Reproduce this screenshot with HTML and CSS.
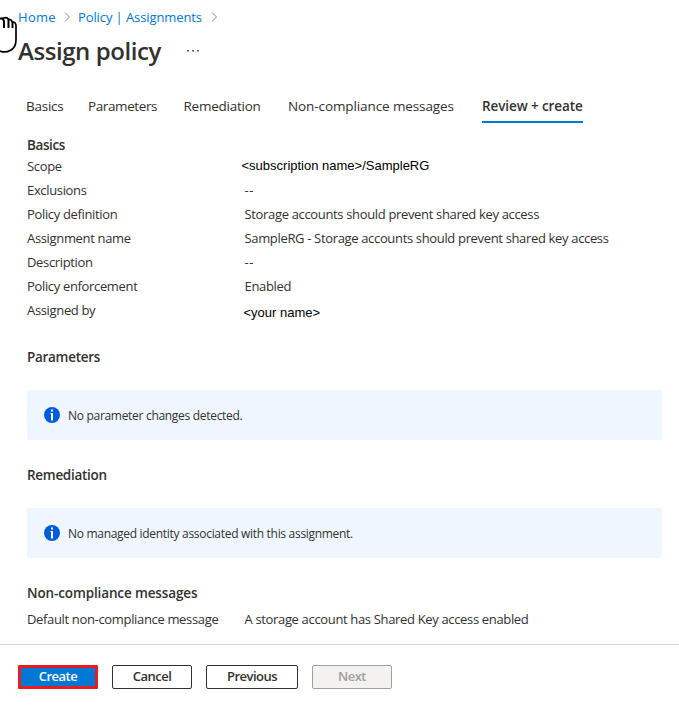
FILE: index.html
```html
<!DOCTYPE html>
<html lang="en">
<head>
<meta charset="utf-8">
<title>Assign policy</title>
<link rel="stylesheet" href="styles.css">
</head>
<body>
<svg class="cursor" width="18" height="40" viewBox="0 0 18 40"><path d="M0 4.500H2.500L4 7V14M8.500 5V14M12.500 7V14" fill="none" stroke="#000" stroke-width="2"/><path d="M3 4.500Q7 2.500 8.500 5.500Q11 5 12.500 8Q16 8 16 12V26Q16 34 10 36.500Q6 39 0 37" fill="none" stroke="#000" stroke-width="1.700"/></svg>
<header class="top">
  <nav class="crumbs">
    <a class="home">Home</a>
    <svg class="chev" width="7" height="10" viewBox="0 0 7 10"><path d="M1 .5 5.500 5 1 9.500"/></svg>
    <a class="policy">Policy | Assignments</a>
    <svg class="chev" width="7" height="10" viewBox="0 0 7 10"><path d="M1 .5 5.500 5 1 9.500"/></svg>
  </nav>
  <div class="heading"><h1>Assign policy</h1><svg class="more" width="12" height="2" viewBox="0 0 12 2"><path d="M0 0h2v1.500H0zM5 0h2v1.500H5zM10 0h2v1.500h-2z"/></svg></div>
</header>
<nav class="tabs">
  <a class="t1">Basics</a><a class="t2">Parameters</a><a class="t3">Remediation</a><a class="t4">Non-compliance messages</a><a class="t5 active">Review + create</a>
</nav>
<main>
  <h2>Basics</h2>
  <dl>
    <dt>Scope</dt><dd class="arial scope">&lt;subscription name&gt;/SampleRG</dd>
    <dt>Exclusions</dt><dd class="none">--</dd>
    <dt>Policy definition</dt><dd>Storage accounts should prevent shared key access</dd>
    <dt>Assignment name</dt><dd>SampleRG - Storage accounts should prevent shared key access</dd>
    <dt>Description</dt><dd class="none">--</dd>
    <dt>Policy enforcement</dt><dd>Enabled</dd>
    <dt>Assigned by</dt><dd class="arial name">&lt;your name&gt;</dd>
  </dl>
  <h2 class="section">Parameters</h2>
  <div class="info"><svg width="16" height="16" viewBox="0 0 16 16"><circle cx="8" cy="8" r="8"/><path d="M6.500 6H9v7.500H7V7h-.5zM7 2.500h2v2H7z"/></svg><span>No parameter changes detected.</span></div>
  <h2 class="section">Remediation</h2>
  <div class="info"><svg width="16" height="16" viewBox="0 0 16 16"><circle cx="8" cy="8" r="8"/><path d="M6.500 6H9v7.500H7V7h-.5zM7 2.500h2v2H7z"/></svg><span>No managed identity associated with this assignment.</span></div>
  <h2 class="section wide">Non-compliance messages</h2>
  <dl class="messages"><dt>Default non-compliance message</dt><dd>A storage account has Shared Key access enabled</dd></dl>
</main>
<footer>
  <button class="create">Create</button><button>Cancel</button><button class="previous">Previous</button><button class="next" disabled>Next</button>
</footer>
</body>
</html>
```
FILE: styles.css
```css
* { box-sizing: border-box; }
body { margin: 0; width: 679px; height: 705px; overflow: hidden; background: #fff; color: #323130; font: 13px/24px "Open Sans", "Noto Sans", sans-serif; position: relative; white-space: nowrap; }
h1, h2, dl, dd { margin: 0; }
.cursor { position: absolute; left: 0; top: 14px; }
.top { height: 84px; padding: 7px 0 0 18px; }
.crumbs { display: flex; align-items: center; height: 20px; color: #0078d4; }
.home { width: 46px; letter-spacing: .3px; }
.policy { width: 133px; margin-left: 7px; letter-spacing: -.1px; }
.chev { fill: none; stroke: #8a8886; stroke-width: 1; }
.heading { display: flex; height: 48px; align-items: center; }
h1 { width: 169px; font-size: 24px; line-height: 32px; font-weight: 600; letter-spacing: -.43px; }
.more { fill: #605e5c; }
.tabs { display: flex; height: 39px; padding-left: 26px; font-size: 13.500px; letter-spacing: -.25px; }
.tabs a { height: 39px; line-height: 44px; }
.t1 { width: 62px; }
.t2 { width: 95.500px; letter-spacing: -.4px; }
.t3 { width: 104.500px; }
.t4 { width: 194px; letter-spacing: -.1px; }
.t5 { width: 101px; letter-spacing: -.1px; }
.tabs .active { border-bottom: 2px solid #0078d4; font-weight: 600; }
main { height: 521px; padding: 12px 17px 0 27px; }
h2 { font-size: 13.500px; line-height: 20px; font-weight: 600; letter-spacing: -.4px; }
h2.section { letter-spacing: -.3px; }
h2.wide { letter-spacing: -.13px; }
dl { display: grid; grid-template-columns: 217.500px 1fr; grid-auto-rows: 24px; margin-top: -1px; letter-spacing: -.34px; }
.none { letter-spacing: .5px; }
.arial { font-family: "Liberation Sans", Arial, sans-serif; color: #000; letter-spacing: 0; }
.scope { margin-left: -3px; }
.name { margin: 3px 0 0 -1px; }
.section { margin-top: 25px; }
.info { display: flex; align-items: center; height: 50px; margin-top: 23px; padding-left: 17px; background: #f0f6ff; border-radius: 2px; font-size: 12px; letter-spacing: -.3px; }
.info svg { margin-right: 8px; }
.info span { padding-top: 2px; }
.info circle { fill: #015cda; }
.info path { fill: #fff; }
.messages { margin-top: 4px; }
footer { display: flex; height: 61px; padding: 20px 0 0 18px; gap: 14px; border-top: 1px solid #d6d6d6; }
button { width: 80px; height: 24px; padding: 0 0 2px; border: 1px solid #323130; border-radius: 2px; background: #fff; color: #323130; font: 600 13px/20px "Open Sans", sans-serif; letter-spacing: -.5px; }
.create { border: 3px solid #e81c23; border-radius: 1px; background: #0078d4; color: #fff; line-height: 16px; }
.previous { width: 92px; }
.next { background: #f3f2f1; border-color: #a19f9d; color: #a19f9d; }
```
